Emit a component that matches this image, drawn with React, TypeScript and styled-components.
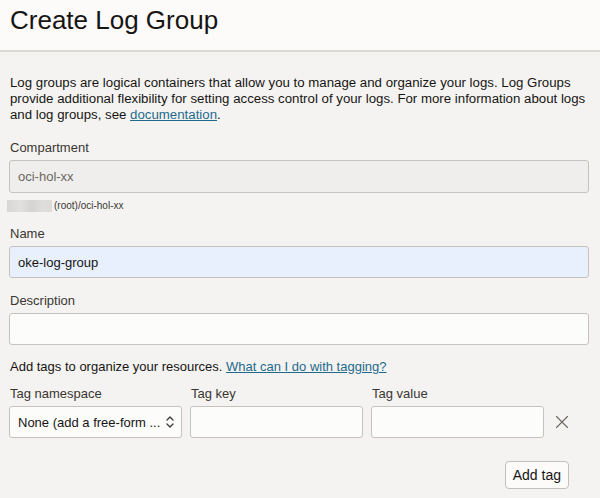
import React from "react";
import styled, { createGlobalStyle } from "styled-components";

const Global = createGlobalStyle`
  html, body { margin: 0; padding: 0; }
  body {
    background: #f4f3f1;
    font-family: "Liberation Sans", Arial, sans-serif;
    color: #161513;
  }
`;

const Page = styled.div`
  width: 600px;
  min-height: 498px;
  background: #f4f3f1;
  overflow: hidden;
`;

const Header = styled.header`
  height: 52px;
  box-sizing: border-box;
  padding: 5px 10px 0;
  background: #fcfbfa;
  border-bottom: 2px solid #dcd8d4;
`;

const Title = styled.h1`
  margin: 0;
  font-size: 26px;
  line-height: 30px;
  font-weight: 400;
  color: #161513;
`;

const Content = styled.main`
  padding: 0 11px 0 9px;
  display: flex;
  flex-direction: column;
`;

const Intro = styled.p`
  margin: 23px 0 0 1px;
  font-size: 13.25px;
  line-height: 16px;
  color: #161513;
`;

const Link = styled.a`
  color: #1f6a8c;
  text-decoration: underline;
  cursor: pointer;
`;

const Field = styled.div<{ $mt: number }>`
  margin-top: ${(p) => p.$mt}px;
  display: flex;
  flex-direction: column;
`;

const Label = styled.label`
  font-size: 13px;
  line-height: 16px;
  color: #3a3632;
  margin: 0 0 4px 1px;
`;

const TextBox = styled.div<{ $variant?: "disabled" | "filled" | "empty"; $h?: number }>`
  height: ${(p) => p.$h ?? 32}px;
  box-sizing: border-box;
  border: 1px solid #c6c3bf;
  border-radius: 3px;
  padding: 0 8px;
  display: flex;
  align-items: center;
  font-size: 13px;
  background: ${(p) =>
    p.$variant === "disabled" ? "#efeeec" : p.$variant === "filled" ? "#e8f0fe" : "#fcfcfb"};
  color: ${(p) => (p.$variant === "disabled" ? "#6b6762" : "#161513")};
`;

const Helper = styled.div`
  display: flex;
  align-items: center;
  gap: 2px;
  margin-top: 6px;
  font-size: 10px;
  line-height: 14px;
  color: #3a3632;
`;

const Blur = styled.span`
  display: inline-block;
  width: 45px;
  height: 12px;
  margin-left: -2px;
  background: linear-gradient(90deg, #d8d6d4 0%, #e2e0de 30%, #d6d4d2 55%, #e0dedc 80%, #dcdad8 100%);
`;

const TagNote = styled.div`
  margin: 14px 0 0 1px;
  font-size: 13px;
  line-height: 16px;
  color: #161513;
`;

const TagGrid = styled.div`
  margin-top: 11px;
  display: grid;
  grid-template-columns: 173px 173px 173px 1fr;
  column-gap: 8px;
  row-gap: 4px;
  align-items: center;
`;

const TagLabel = styled.div`
  font-size: 13px;
  line-height: 16px;
  color: #3a3632;
  padding-left: 1px;
`;

const SelectBox = styled.div`
  height: 32px;
  box-sizing: border-box;
  border: 1px solid #c6c3bf;
  border-radius: 3px;
  background: #fcfcfb;
  display: flex;
  align-items: center;
  padding: 0 6px 0 8px;
  font-size: 13px;
  color: #161513;
  gap: 4px;
`;

const SelectText = styled.span`
  flex: 1;
  white-space: nowrap;
`;

const Remove = styled.button`
  border: none;
  background: none;
  padding: 0;
  margin-left: 4px;
  width: 12px;
  height: 12px;
  display: flex;
  align-items: center;
  justify-content: center;
  cursor: pointer;
`;

const Actions = styled.div`
  margin-top: 23px;
  display: flex;
  justify-content: flex-end;
  padding-right: 20px;
`;

const Button = styled.button`
  height: 28px;
  padding: 0 7px;
  border: 1px solid #c3c0bc;
  border-radius: 4px;
  background: #fcfbfa;
  font-family: "Liberation Sans", Arial, sans-serif;
  font-size: 14px;
  color: #161513;
`;

const Chevrons = () => (
  <svg width="10" height="14" viewBox="0 0 10 14" fill="none" stroke="#3a3632" strokeWidth="1.3" strokeLinecap="round" strokeLinejoin="round">
    <path d="M2 5 L5 2 L8 5" />
    <path d="M2 9 L5 12 L8 9" />
  </svg>
);

const Cross = () => (
  <svg width="12" height="12" viewBox="0 0 12 12" stroke="#6a665f" strokeWidth="1.1" strokeLinecap="round">
    <path d="M0.5 0.5 L11.5 11.5 M11.5 0.5 L0.5 11.5" />
  </svg>
);

export default function App() {
  return (
    <Page>
      <Global />
      <Header>
        <Title>Create Log Group</Title>
      </Header>
      <Content>
        <Intro>
          Log groups are logical containers that allow you to manage and organize your logs. Log Groups
          provide additional flexibility for setting access control of your logs. For more information about logs
          and log groups, see <Link>documentation</Link>.
        </Intro>

        <Field $mt={17}>
          <Label>Compartment</Label>
          <TextBox $variant="disabled" $h={33}>oci-hol-xx</TextBox>
          <Helper>
            <Blur />
            <span>(root)/oci-hol-xx</span>
          </Helper>
        </Field>

        <Field $mt={13}>
          <Label>Name</Label>
          <TextBox $variant="filled">oke-log-group</TextBox>
        </Field>

        <Field $mt={15}>
          <Label>Description</Label>
          <TextBox $variant="empty" />
        </Field>

        <TagNote>
          Add tags to organize your resources. <Link>What can I do with tagging?</Link>
        </TagNote>

        <TagGrid>
          <TagLabel>Tag namespace</TagLabel>
          <TagLabel>Tag key</TagLabel>
          <TagLabel>Tag value</TagLabel>
          <div />
          <SelectBox>
            <SelectText>None (add a free-form ...</SelectText>
            <Chevrons />
          </SelectBox>
          <TextBox $variant="empty" />
          <TextBox $variant="empty" />
          <Remove aria-label="Remove tag">
            <Cross />
          </Remove>
        </TagGrid>

        <Actions>
          <Button>Add tag</Button>
        </Actions>
      </Content>
    </Page>
  );
}
